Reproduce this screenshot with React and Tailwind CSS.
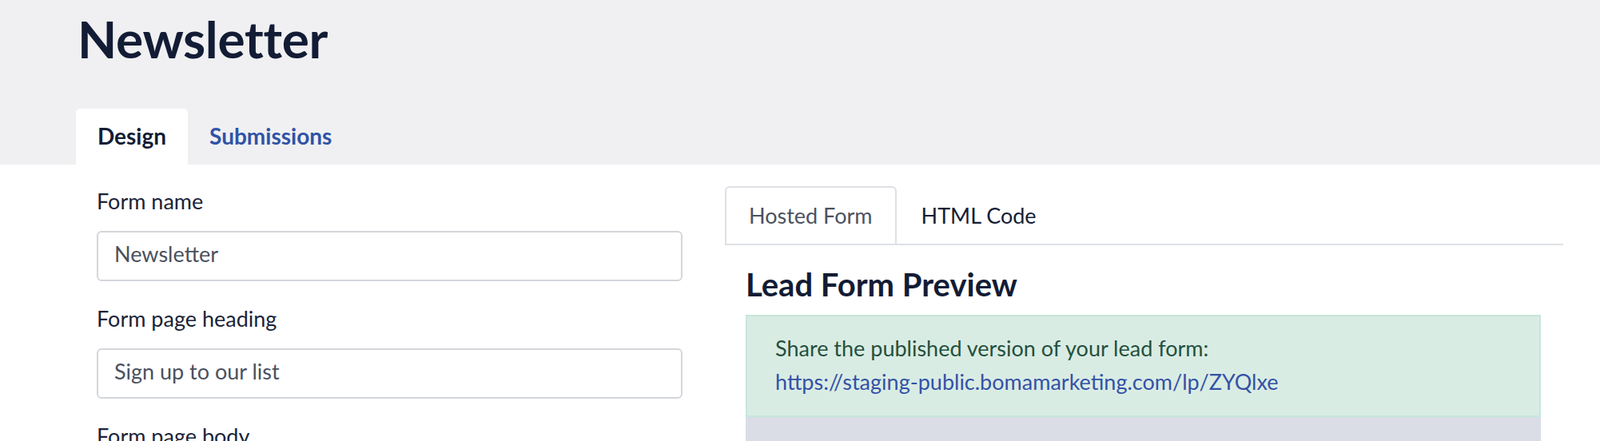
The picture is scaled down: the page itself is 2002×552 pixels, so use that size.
import { useState } from 'react'

const fields = [
  { label: 'Form name', value: 'Newsletter' },
  { label: 'Form page heading', value: 'Sign up to our list' },
  { label: 'Form page body', value: '' },
]

export default function App() {
  const [tab,     setTab]     = useState('design')     // design | submissions
  const [preview, setPreview] = useState('hosted')     // hosted | html

  return (
    <div className="min-h-screen bg-white font-['Lato','Noto_Sans',sans-serif] text-[#17213a]">

      {/* ── Page header ─────────────────────────────────────────── */}
      <header className="bg-[#f0f0f2] h-[206px] px-[95px] flex flex-col">
        <h1 className="pt-[17px] pl-[2px] text-[64px] leading-none font-bold text-[#131c35] tracking-[-0.005em]">
          Newsletter
        </h1>
        <nav className="mt-auto flex">
          <button
            onClick={() => setTab('design')}
            className={`h-[70px] px-[27px] pb-[2px] rounded-t-[5px] text-[28px] font-bold ${
              tab === 'design' ? 'bg-white text-[#131c35]' : 'text-[#2f53a6]'
            }`}
          >
            Design
          </button>
          <button
            onClick={() => setTab('submissions')}
            className={`h-[70px] px-[27px] pb-[2px] rounded-t-[5px] text-[28px] font-bold ${
              tab === 'submissions' ? 'bg-white text-[#131c35]' : 'text-[#2f53a6]'
            }`}
          >
            Submissions
          </button>
        </nav>
      </header>

      {/* ── Body ────────────────────────────────────────────────── */}
      <main className="flex pl-[121px]">

        {/* Left: form fields */}
        <div className="w-[733px] pt-[27px]">
          {fields.map(f => (
            <div key={f.label} className="mb-[28px]">
              <label className="block text-[27px] leading-[37px] text-[#1b2438] mb-[19px]">
                {f.label}
              </label>
              <input
                type="text"
                defaultValue={f.value}
                className="w-full h-[63px] px-[20px] pb-[6px] border-2 border-[#d3d6db] rounded-[6px] text-[27px] text-[#4a515e] bg-white focus:outline-none"
              />
            </div>
          ))}
        </div>

        {/* Right: preview */}
        <div className="w-[1049px] ml-[53px] pt-[27px]">
          <div className="flex border-b-2 border-[#dee1e6]">
            <button
              onClick={() => setPreview('hosted')}
              className={`h-[74px] px-[28px] pb-[2px] -mb-[2px] rounded-t-[6px] text-[27px] border-2 border-b-0 ${
                preview === 'hosted' ? 'border-[#dee1e6] text-[#4b5260]' : 'border-transparent text-[#151e36]'
              }`}
            >
              Hosted Form
            </button>
            <button
              onClick={() => setPreview('html')}
              className={`h-[74px] px-[29px] pb-[2px] -mb-[2px] rounded-t-[6px] text-[27px] border-2 border-b-0 ${
                preview === 'html' ? 'border-[#dee1e6] text-[#4b5260]' : 'border-transparent text-[#151e36]'
              }`}
            >
              HTML Code
            </button>
          </div>

          <div className="pl-[26px] pr-[28px]">
            <h2 className="pt-[25px] text-[40px] leading-[1.2] font-bold text-[#131c35]">
              Lead Form Preview
            </h2>

            <div className="mt-[14px] bg-[#d9ece4] border-2 border-[#c6e6da] pl-[35px] pt-[19px] pb-[21px] text-[27px] leading-[42px]">
              <p className="text-[#24503d]">Share the published version of your lead form:</p>
              <a href="#" className="text-[#3352a6]">https://staging-public.bomamarketing.com/lp/ZYQlxe</a>
            </div>

            <div className="bg-[#dadde6] h-[200px]" />
          </div>
        </div>
      </main>
    </div>
  )
}
